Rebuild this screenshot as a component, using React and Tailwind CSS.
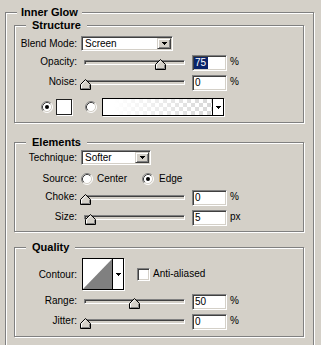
import React from "react";

const SUNKEN =
  "border border-t-[#808080] border-l-[#808080] border-r-white border-b-white shadow-[inset_1px_1px_0_#404040,inset_-1px_-1px_0_#d4d0c8]";

function Group({ title, pad, className, children }) {
  return (
    <div
      className={`relative border border-[#808080] shadow-[inset_1px_1px_0_#fff,1px_1px_0_#fff] ${className}`}
    >
      <div
        className={`absolute left-[11px] top-[-7px] bg-[#d4d0c8] text-[11px] font-bold leading-[13px] ${pad}`}
      >
        {title}
      </div>
      {children}
    </div>
  );
}

function Label({ children, slider }) {
  return (
    <div
      className={`w-[62px] shrink-0 text-right ${
        slider ? "h-[14px] self-start leading-[14px]" : "leading-[15px]"
      }`}
    >
      {children}
    </div>
  );
}

function Arrow() {
  return (
    <svg width="5" height="3" viewBox="0 0 5 3" shapeRendering="crispEdges">
      <rect x="0" y="0" width="5" height="1" fill="#000" />
      <rect x="1" y="1" width="3" height="1" fill="#000" />
      <rect x="2" y="2" width="1" height="1" fill="#000" />
    </svg>
  );
}

function DropBtn() {
  return (
    <div className="flex w-[14px] shrink-0 items-center justify-center border border-t-[#d4d0c8] border-l-[#d4d0c8] border-r-[#404040] border-b-[#404040] bg-[#d4d0c8] pl-[1px] shadow-[inset_1px_1px_0_#fff,inset_-1px_-1px_0_#808080]">
      <Arrow />
    </div>
  );
}

function Select({ w, text }) {
  return (
    <div className={`ml-[4px] flex h-[15px] ${w} items-stretch bg-white p-[1px] ${SUNKEN}`}>
      <div className="flex-1 pl-[2px] leading-[11px]">{text}</div>
      <DropBtn />
    </div>
  );
}

function Thumb({ pos }) {
  return (
    <svg
      className={`absolute top-[4px] ${pos}`}
      width="11"
      height="11"
      viewBox="0 0 11 11"
    >
      <polygon
        points="5.5,0.5 10.5,5.5 10.5,10.5 0.5,10.5 0.5,5.5"
        fill="#d4d0c8"
        stroke="#000"
      />
      <polyline points="1.5,9.5 1.5,5.9 5.5,1.9" fill="none" stroke="#fff" />
      <polyline points="9.5,5.9 9.5,9.5 1.5,9.5" fill="none" stroke="#808080" />
    </svg>
  );
}

function Slider({ pos }) {
  return (
    <div className="relative ml-[7px] h-[16px] w-[101px] shrink-0">
      <div className="absolute left-0 top-[5px] h-[5px] w-[101px] border border-t-[#808080] border-l-[#808080] border-r-white border-b-white bg-[#d4d0c8] shadow-[inset_1px_1px_0_#404040]" />
      <Thumb pos={pos} />
    </div>
  );
}

function NumBox({ value, selected }) {
  return (
    <div className={`ml-[7px] flex h-[16px] w-[35px] shrink-0 items-start bg-white pl-[1px] pt-[1px] ${SUNKEN}`}>
      <span
        className={`pl-[1px] pr-[2px] leading-[12px] ${
          selected ? "bg-[#0a246a] text-white" : ""
        }`}
      >
        {value}
      </span>
    </div>
  );
}

function SliderRow({ label, pos, value, unit, selected, className }) {
  return (
    <div className={`flex h-[16px] items-center ${className}`}>
      <Label slider>{label}</Label>
      <Slider pos={pos} />
      <NumBox value={value} selected={selected} />
      <div className="ml-[3px] h-[14px] self-start leading-[14px]">{unit}</div>
    </div>
  );
}

function Radio({ on, className = "" }) {
  return (
    <svg width="12" height="12" viewBox="0 0 12 12" className={`shrink-0 ${className}`}>
      <circle cx="6" cy="6" r="5" fill="#fff" />
      <path d="M2.11 9.89A5.5 5.5 0 0 1 9.89 2.11" stroke="#808080" fill="none" />
      <path d="M9.89 2.11A5.5 5.5 0 0 1 2.11 9.89" stroke="#fff" fill="none" />
      <path d="M2.82 9.18A4.5 4.5 0 0 1 9.18 2.82" stroke="#404040" fill="none" />
      <path d="M9.18 2.82A4.5 4.5 0 0 1 2.82 9.18" stroke="#d4d0c8" fill="none" />
      {on && <circle cx="6" cy="6" r="2" fill="#000" />}
    </svg>
  );
}

export default function App() {
  return (
    <div className="h-[345px] w-[321px] overflow-hidden bg-[#d4d0c8] pl-[5px] pt-[12px] font-['Liberation_Sans',Arial,sans-serif] text-[10px] text-black">
      <Group title="Inner Glow" pad="px-[4px]" className="h-[400px] w-[309px] pl-[8px] pt-[12px]">
        {/* Structure */}
        <Group title="Structure" pad="px-[6px]" className="w-[290px] pb-[6px] pt-[10px]">
          <div className="flex h-[15px] items-center">
            <Label>Blend Mode:</Label>
            <Select w="w-[92px]" text="Screen" />
          </div>
          <SliderRow className="mt-[4px]" label="Opacity:" pos="left-[71px]" value="75" unit="%" selected />
          <SliderRow className="mt-[4px]" label="Noise:" pos="left-[-4px]" value="0" unit="%" />
          <div className="mt-[7px] flex h-[18px] items-center">
            <Radio on className="ml-[26px]" />
            <div className="ml-[3px] h-[16px] w-[16px] border border-[#202020] bg-white shadow-[1px_1px_0_#fff]" />
            <Radio className="ml-[13px]" />
            <div className="ml-[5px] flex h-[18px] w-[122px] border border-black shadow-[1px_1px_0_#fff]">
              <div className="flex-1 bg-[conic-gradient(#d0d0d0_25%,#fff_0_50%,#d0d0d0_0_75%,#fff_0)] bg-[length:8px_8px]">
                <div className="h-full w-full bg-[linear-gradient(to_right,#fff_10%,rgba(255,255,255,0.15))]" />
              </div>
              <div className="flex w-[11px] items-center justify-center border-l border-black bg-white">
                <Arrow />
              </div>
            </div>
          </div>
        </Group>

        {/* Elements */}
        <Group title="Elements" pad="px-[6px]" className="mt-[19px] w-[290px] pb-[5px] pt-[7px]">
          <div className="flex h-[15px] items-center">
            <Label>Technique:</Label>
            <Select w="w-[70px]" text="Softer" />
          </div>
          <div className="mt-[7px] flex h-[14px] items-center">
            <div className="w-[62px] shrink-0 text-right leading-[14px]">Source:</div>
            <Radio className="ml-[4px]" />
            <div className="ml-[4px] leading-[14px]">Center</div>
            <Radio on className="ml-[15px]" />
            <div className="ml-[5px] leading-[14px]">Edge</div>
          </div>
          <SliderRow className="mt-[4px]" label="Choke:" pos="left-[-4px]" value="0" unit="%" />
          <SliderRow className="mt-[4px]" label="Size:" pos="left-[1px]" value="5" unit="px" />
        </Group>

        {/* Quality */}
        <Group title="Quality" pad="px-[6px]" className="mt-[15px] w-[290px] pb-[6px] pt-[10px]">
          <div className="flex h-[32px] items-center">
            <Label>Contour:</Label>
            <div className="ml-[5px] flex h-[32px] w-[42px] border border-black bg-white shadow-[1px_1px_0_#fff]">
              <svg width="29" height="30" viewBox="0 0 29 30" className="shrink-0">
                <polygon points="0,30 29,0 29,30" fill="#808080" />
              </svg>
              <div className="flex w-[11px] items-center justify-center border-l border-black bg-white">
                <Arrow />
              </div>
            </div>
            <div className={`ml-[13px] h-[13px] w-[13px] bg-white ${SUNKEN}`} />
            <div className="ml-[3px] leading-[14px]">Anti-aliased</div>
          </div>
          <SliderRow className="mt-[4px]" label="Range:" pos="left-[45px]" value="50" unit="%" />
          <SliderRow className="mt-[4px]" label="Jitter:" pos="left-[-4px]" value="0" unit="%" />
        </Group>
      </Group>
    </div>
  );
}
